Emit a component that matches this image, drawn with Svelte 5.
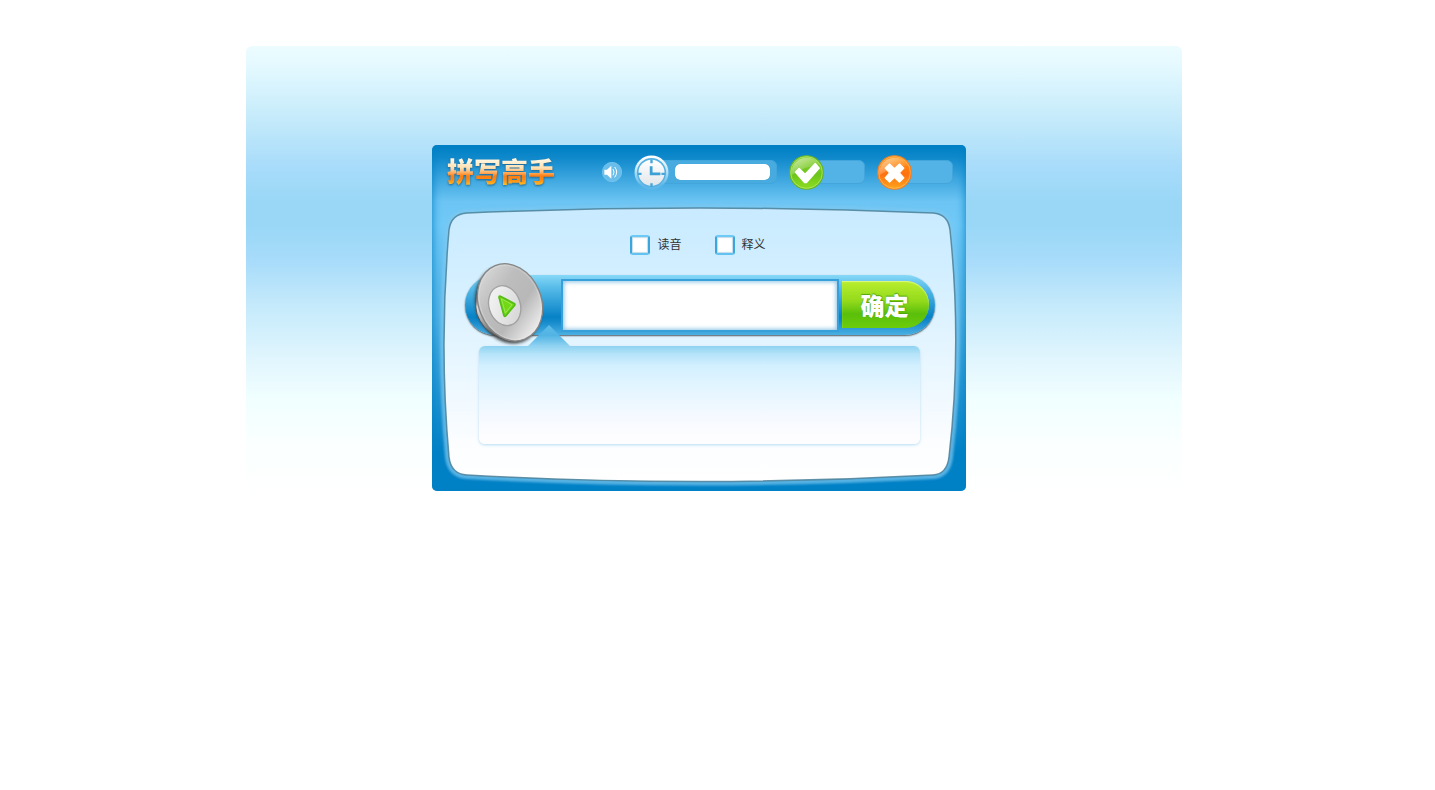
<script>
  let answer = $state('');
  let withSound = $state(false);
  let withMeaning = $state(false);
  let timeLeft = $state(100);
  let hint = $state('');
  let right = $state('');
  let wrong = $state('');
</script>

<main class="stage">
  <section class="card">
    <svg class="frame" viewBox="0 0 534 346" preserveAspectRatio="none" aria-hidden="true">
      <defs>
        <linearGradient id="panelFill" x1="0" y1="0" x2="0" y2="1">
          <stop offset="0" stop-color="#c9eaff" />
          <stop offset="0.2" stop-color="#d0eeff" />
          <stop offset="0.6" stop-color="#eaf7ff" />
          <stop offset="0.85" stop-color="#fbfdff" />
          <stop offset="1" stop-color="#ffffff" />
        </linearGradient>
        <path id="panelShape" d="M17 85 Q19 69 35 68 Q267 58 501 68 Q516 69 518 85 Q530 200 517 312 Q515 329 501 330 Q267 343 35 330 Q19 329 17 312 Q7 200 17 85Z" />
        <filter id="soft" x="-5%" y="-5%" width="110%" height="110%"><feGaussianBlur stdDeviation="1" /></filter>
        <filter id="edge" x="-5%" y="-5%" width="110%" height="110%"><feGaussianBlur stdDeviation="0.6" /></filter>
      </defs>
      <use href="#panelShape" fill="none" stroke="#7cc8f0" stroke-width="8" opacity="0.7" filter="url(#soft)" />
      <use href="#panelShape" fill="url(#panelFill)" />
      <use href="#panelShape" fill="none" stroke="#4c8199" stroke-width="1.5" opacity="0.85" filter="url(#edge)" />
    </svg>

    <header class="bar">
      <h1>拼写高手</h1>
      <button class="mute" type="button" aria-label="声音">
        <svg viewBox="36 51 60 60">
          <circle cx="66" cy="81" r="29" fill="#69bdea" stroke="#83cdf2" stroke-width="2" />
          <path d="M43 74h8l13-12v39L51 89h-8z" fill="#fff" />
          <path d="M69 72q6 9 0 19M74 66q12 15 0 31" fill="none" stroke="#fff" stroke-width="3" />
        </svg>
      </button>

      <div class="meter">
        <svg class="clock" viewBox="131 31 102 102" aria-hidden="true">
          <defs>
            <linearGradient id="clockFace" x1="0" y1="0" x2="0" y2="1">
              <stop offset="0" stop-color="#fff" /><stop offset="1" stop-color="#e2e6ea" />
            </linearGradient>
            <linearGradient id="clockRim" x1="0" y1="0" x2="0" y2="1">
              <stop offset="0" stop-color="#fff" /><stop offset="0.35" stop-color="#cdeafa" /><stop offset="0.9" stop-color="#5db7e8" />
            </linearGradient>
          </defs>
          <circle cx="182" cy="82" r="46" fill="#55b1e2" stroke="url(#clockRim)" stroke-width="7" />
          <circle cx="182" cy="83" r="38" fill="url(#clockFace)" />
          <path d="M182 44v11M182 113v11M142 86h11M211 86h11" stroke="#45a6da" stroke-width="7" />
          <path d="M181 64v22h27" fill="none" stroke="#3ba0d6" stroke-width="8" />
        </svg>
        <span class="track"><progress max="100" value={timeLeft} aria-label="剩余时间"></progress></span>
      </div>

      <div class="score">
        <svg viewBox="56 45 104 104" aria-hidden="true">
          <defs>
            <linearGradient id="green" x1="0" y1="0" x2="0" y2="1">
              <stop offset="0" stop-color="#8ed238" /><stop offset="0.55" stop-color="#6cc51a" /><stop offset="1" stop-color="#8fdd20" />
            </linearGradient>
            <linearGradient id="gloss" x1="0" y1="0" x2="1" y2="1">
              <stop offset="0" stop-color="#fff" stop-opacity="0.6" /><stop offset="0.7" stop-color="#fff" stop-opacity="0.05" />
            </linearGradient>
          </defs>
          <circle cx="108" cy="97" r="50" fill="url(#green)" stroke="#65b32b" stroke-width="3" />
          <circle cx="108" cy="97" r="47" fill="none" stroke="#b9ec78" stroke-width="2" />
          <path d="M63 105A46 46 0 0 1 149 77Q105 76 63 105Z" fill="url(#gloss)" />
          <path d="M75 96l11-11 18 17 30-32 12 14-38 43h-6z" fill="#fff" stroke="#fff" stroke-width="4" stroke-linejoin="round" />
        </svg>
        <span class="track">{right}</span>
      </div>

      <div class="score">
        <svg viewBox="321 45 104 104" aria-hidden="true">
          <defs>
            <linearGradient id="orange" x1="0" y1="0" x2="0" y2="1">
              <stop offset="0" stop-color="#ff9a16" /><stop offset="0.55" stop-color="#ff7110" /><stop offset="1" stop-color="#ffa51c" />
            </linearGradient>
          </defs>
          <circle cx="373" cy="97" r="50" fill="url(#orange)" stroke="#e9822d" stroke-width="3" />
          <circle cx="373" cy="97" r="47" fill="none" stroke="#ffc163" stroke-width="2" />
          <path d="M328 105A46 46 0 0 1 414 77Q370 76 328 105Z" fill="url(#gloss)" />
          <path d="M358 71l15 14 15-14 13 13-13 14 13 15-13 13-15-14-15 14-13-13 13-15-13-14z" fill="#fff" stroke="#fff" stroke-width="3" stroke-linejoin="round" />
        </svg>
        <span class="track">{wrong}</span>
      </div>
    </header>

    <div class="options">
      <label><input type="checkbox" bind:checked={withSound} /><span>读音</span></label>
      <label><input type="checkbox" bind:checked={withMeaning} /><span>释义</span></label>
    </div>

    <form class="entry" onsubmit={(e) => e.preventDefault()}>
      <button class="speaker" type="button" aria-label="播放">
        <svg viewBox="45 15 240 270">
          <defs>
            <linearGradient id="cone" x1="0.2" y1="0" x2="0.7" y2="1">
              <stop offset="0" stop-color="#dadada" /><stop offset="0.35" stop-color="#bdbdbd" />
              <stop offset="0.65" stop-color="#b8b8b8" /><stop offset="1" stop-color="#f2f2f2" />
            </linearGradient>
            <linearGradient id="dish" x1="0" y1="0" x2="1" y2="1">
              <stop offset="0" stop-color="#f8f8f8" /><stop offset="1" stop-color="#d2d2d2" />
            </linearGradient>
            <linearGradient id="backRim" x1="0" y1="0" x2="0" y2="1">
              <stop offset="0" stop-color="#666" /><stop offset="0.4" stop-color="#ddd" /><stop offset="0.7" stop-color="#999" /><stop offset="1" stop-color="#444" />
            </linearGradient>
            <filter id="shade" x="-20%" y="-20%" width="140%" height="140%"><feGaussianBlur stdDeviation="5" /></filter>
          </defs>
          <ellipse cx="159" cy="150" rx="95" ry="119" transform="rotate(-22 159 150)" fill="#222" opacity="0.8" filter="url(#shade)" />
          <path d="M70 105Q52 160 75 197Q98 240 150 253L180 200L90 100Z" fill="url(#backRim)" stroke="#555" stroke-width="3" />
          <ellipse cx="165" cy="142" rx="94" ry="119" transform="rotate(-22 165 142)" fill="url(#cone)" stroke="#858585" stroke-width="4" />
          <ellipse cx="165" cy="142" rx="89" ry="114" transform="rotate(-22 165 142)" fill="none" stroke="#eee" stroke-width="3" opacity="0.3" />
          <ellipse cx="149" cy="152" rx="47" ry="61" transform="rotate(-18 149 152)" fill="url(#dish)" stroke="#a2a2a2" stroke-width="4" />
          <path d="M136 124L179 146Q181 149 178 152L152 183Q149 186 147 182L132 127Q132 122 136 124Z" fill="#72d716" stroke="#55bd16" stroke-width="5" stroke-linejoin="round" />
          <path d="M139 131L171 149L151 174Z" fill="none" stroke="#9be94f" stroke-width="3" stroke-linejoin="round" />
        </svg>
      </button>
      <input class="word" type="text" bind:value={answer} aria-label="拼写" autocomplete="off" />
      <button class="submit" type="submit">确定</button>
      <svg class="pointer" viewBox="0 0 42 21" aria-hidden="true">
        <defs>
          <linearGradient id="tip" x1="0" y1="0" x2="0" y2="1">
            <stop offset="0" stop-color="#5bbbe8" /><stop offset="0.5" stop-color="#52b4e4" /><stop offset="1" stop-color="#8ed2f1" />
          </linearGradient>
        </defs>
        <path d="M21 0L42 21H0Z" fill="url(#tip)" />
      </svg>
    </form>

    <div class="hint">{hint}</div>
  </section>
</main>

<style>
  :global(body) {
    padding-right: 7px;
    background: #fff;
    font-family: "Liberation Sans", "Noto Sans CJK SC", sans-serif;
  }
  button {
    padding: 0;
    border: 0;
    background: none;
    cursor: pointer;
  }
  svg {
    display: block;
  }
  .stage {
    box-sizing: border-box;
    max-width: 936px;
    min-height: 450px;
    margin: 46px auto 0;
    padding: 99px 30px 0 0;
    border-radius: 6px;
    background: linear-gradient(#ecfcff 0, #e4f9ff 20px, #caedfb 64px, #a8dcfa 120px, #9ad7f7 155px, #9ad7f7 180px, #a8dcfa 216px, #c5eafb 260px, #e4f7fe 320px, #f1ffff 354px, #fbffff 400px, #fff 450px);
  }
  .card {
    position: relative;
    box-sizing: border-box;
    max-width: 534px;
    margin: 0 auto;
    padding-bottom: 47px;
    border-radius: 5px;
    background: linear-gradient(#007fc4 0, #0e88cb 12px, #6bc4f3 56px, #70c9f7 80px, #52b3e5 170px, #1b90cf 260px, #0080c5 310px);
    box-shadow: inset 0 0 10px #0080c5;
  }
  .frame {
    position: absolute;
    inset: 0;
    width: 100%;
    height: 100%;
  }
  .bar,
  .options,
  .entry,
  .hint {
    position: relative;
  }
  .bar {
    display: flex;
    align-items: center;
    gap: 12px;
    height: 54px;
    padding: 0 13px 0 15px;
  }
  h1 {
    margin: 0 auto 0 0;
    padding-bottom: 2px;
    font: 900 27px/32px "Noto Sans CJK SC", sans-serif;
    color: transparent;
    background: linear-gradient(#fff6e0 5px, #ffe0b0 13px, #ffa95a 18px, #ff7d10 21px, #ff8a10 25px, #ffc02a 30px);
    background-clip: text;
    -webkit-background-clip: text;
    filter: drop-shadow(0 1px 1px #24658f);
  }
  .mute svg {
    width: 20px;
    height: 20px;
  }
  .meter,
  .score {
    display: flex;
    align-items: center;
  }
  .meter {
    width: 143px;
  }
  .score {
    width: 76px;
  }
  .meter svg,
  .score svg {
    position: relative;
    flex: none;
    width: 35px;
    height: 35px;
  }
  .track {
    display: flex;
    flex: 1;
    align-items: center;
    justify-content: center;
    box-sizing: border-box;
    min-width: 0;
    height: 24px;
    margin-left: -18px;
    padding-left: 18px;
    border: 1px solid #42a6dc;
    border-radius: 6px;
    background: #53b3e7;
    color: #fff;
    font-size: 14px;
  }
  .meter .track {
    background: #48abe0;
  }
  progress {
    flex: 1;
    min-width: 0;
    height: 16px;
    margin: 0 6px 0 5px;
    border: 0;
    border-radius: 5px;
    overflow: hidden;
    appearance: none;
    background: #2f9bd5;
  }
  progress::-webkit-progress-bar {
    background: #2f9bd5;
  }
  progress::-webkit-progress-value {
    border-radius: 5px;
    background: #fff;
  }
  .options {
    display: flex;
    justify-content: center;
    gap: 33px;
    height: 20px;
    margin: 36px 2px 20px 0;
  }
  label {
    display: flex;
    gap: 7px;
    color: #333;
    font: 12px/18px "Noto Sans CJK SC", sans-serif;
  }
  .options input {
    box-sizing: border-box;
    width: 20px;
    height: 20px;
    margin: 0;
    border: 2px solid #3ba6de;
    border-top-color: #6ccaf5;
    border-bottom-color: #62c3f0;
    border-radius: 3px;
    appearance: none;
    background: #fff;
    box-shadow: inset 0 0 1px 1px #c4dbe8;
  }
  .options input:checked {
    background: radial-gradient(#1b90cf 4px, #fff 5px);
  }
  .entry {
    display: flex;
    align-items: flex-start;
    box-sizing: border-box;
    height: 60px;
    margin: 0 31px 11px 33px;
    padding: 4px 6px 4px 96px;
    gap: 3px;
    border-radius: 30px;
    background: linear-gradient(#86d8f6, #59bdea 12px, #0782c6 42px, #1288ca 46px, #4bb0e2);
    box-shadow: 0 1px 1px #6f7a80, 0 1px 2px #7f8d96;
  }
  .word {
    flex: 1;
    min-width: 0;
    box-sizing: border-box;
    height: 53px;
    padding: 0 10px;
    border: 2px solid #379fda;
    outline: 0;
    background: #fff;
    box-shadow: inset 0 0 4px 1px #8cc3e4;
    color: #333;
    font: 26px "Liberation Sans", sans-serif;
  }
  .submit {
    width: 87px;
    height: 47px;
    margin-top: 2px;
    padding-right: 2px;
    border-radius: 0 24px 24px 0;
    background: linear-gradient(#b9ee2f, #93da1b 20px, #5abf0a 33px, #6dcd0c);
    box-shadow: inset 0 1px 1px #dcf884;
    color: #fff;
    font: 900 24px/47px "Noto Sans CJK SC", sans-serif;
    text-shadow: 0 -1px 1px #4fa50c, 1px 0 1px #57ae10;
  }
  .speaker {
    position: absolute;
    left: 5px;
    top: -15px;
  }
  .speaker svg {
    width: 80px;
    height: 90px;
  }
  .pointer {
    position: absolute;
    left: 63px;
    top: 50px;
    width: 42px;
    height: 21px;
  }
  .hint {
    box-sizing: border-box;
    min-height: 98px;
    margin: 0 46px 0 47px;
    padding: 10px 14px;
    border-radius: 6px;
    background: linear-gradient(#8ed2f1 0, #b5e3f9 8px, #d3f0ff 20px, #e3f5ff 42px, #f4f9ff 68px, #fdfdff 90px);
    box-shadow: 0 1px 3px #b5def1;
    color: #333;
    font-size: 14px;
  }
</style>
